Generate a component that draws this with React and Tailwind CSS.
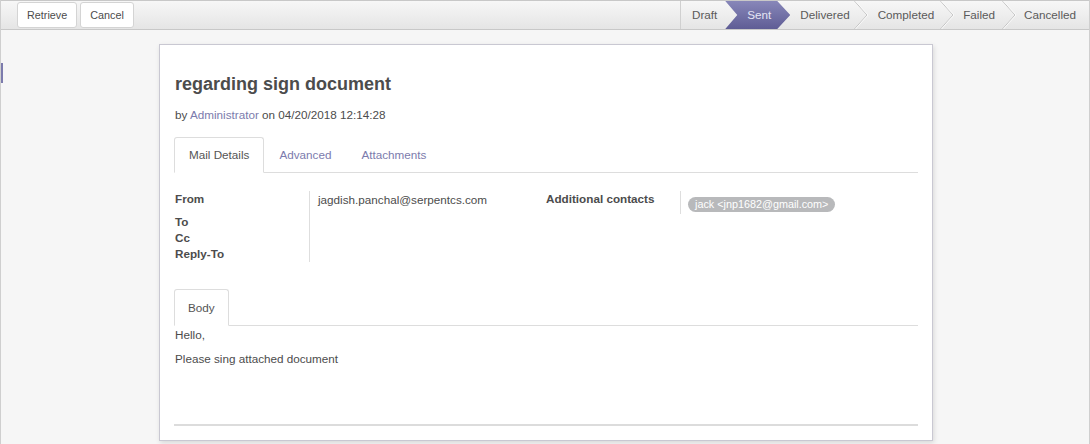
import React from "react";

function Chevron() {
  return (
    <svg width="14" height="28" viewBox="0 0 14 28" className="shrink-0 block">
      <polyline points="0.5,0 13,14 0.5,28" fill="none" stroke="#c4c4c4" strokeWidth="1" />
      <polyline points="1.5,0 14,14 1.5,28" fill="none" stroke="#fafafa" strokeWidth="1" />
    </svg>
  );
}

export default function App() {
  return (
    <div className="relative h-[444px] w-[1090px] overflow-hidden border-l border-r border-[#cfcfcf] bg-[#f6f6f6] font-['Liberation_Sans',Arial,sans-serif] text-[#4c4c4c]">
      <div className="absolute left-0 top-[63px] h-[20px] w-[2px] bg-[#7c7bad]" />

      {/* status bar */}
      <div className="flex h-[30px] items-stretch border-t border-b border-[#c8c8c8] bg-gradient-to-b from-[#f7f7f7] to-[#e5e5e5]">
        <div className="flex items-center gap-[3px] pl-[16px]">
          <button className="h-[26px] rounded-[3px] border border-[#d4d4d4] bg-white px-[9px] text-[10.8px] text-[#4c4c4c]">
            Retrieve
          </button>
          <button className="h-[26px] rounded-[3px] border border-[#d4d4d4] bg-white px-[9px] text-[10.8px] text-[#4c4c4c]">
            Cancel
          </button>
        </div>
        <div className="ml-auto flex h-[28px] items-stretch border-l border-[#d0d0d0] text-[11.7px] text-[#5a5a5a]">
          <div className="flex items-center pl-[11px] pr-[8px]">Draft</div>
          <div className="flex w-[65px] items-center justify-center bg-gradient-to-b from-[#8887b9] to-[#5f5d95] pl-[3px] text-[#e4e4f4] [clip-path:polygon(0_0,calc(100%_-_13px)_0,100%_50%,calc(100%_-_13px)_100%,0_100%,12px_50%)]">
            Sent
          </div>
          <div className="flex items-center pl-[10px] pr-[4px]">Delivered</div>
          <Chevron />
          <div className="flex items-center pl-[10px] pr-[6px]">Completed</div>
          <Chevron />
          <div className="flex items-center pl-[9px] pr-[7px]">Failed</div>
          <Chevron />
          <div className="flex items-center pl-[8px] pr-[13px]">Cancelled</div>
        </div>
      </div>

      {/* sheet */}
      <div className="ml-[158px] mt-[14px] w-[774px] border border-[#c9c8d2] bg-white pl-[15px] pr-[14px] pt-[28px] shadow-[1px_2px_5px_rgba(0,0,0,0.12)]">
        <h1 className="text-[18px] font-bold leading-[22px] text-[#4c4c4c]">regarding sign document</h1>
        <div className="mt-[11px] text-[11.7px] leading-[18px]">
          by <span className="text-[#7c7bad]">Administrator</span> on 04/20/2018 12:14:28
        </div>

        {/* tabs */}
        <div className="-ml-px mt-[13px] flex h-[36px] items-stretch border-b border-[#dddddd] text-[11.7px]">
          <div className="-mb-px flex items-center rounded-t-[3px] border border-[#dddddd] border-b-white bg-white px-[14px] text-[#555]">
            Mail Details
          </div>
          <div className="flex items-center px-[15px] text-[#7c7bad]">Advanced</div>
          <div className="flex items-center px-[15px] text-[#7c7bad]">Attachments</div>
        </div>

        {/* groups */}
        <div className="mt-[18px] flex text-[11.7px]">
          <div className="flex w-[371px]">
            <div className="flex w-[134px] flex-col font-bold leading-[16px]">
              <div>From</div>
              <div className="mt-[7px]">To</div>
              <div>Cc</div>
              <div>Reply-To</div>
            </div>
            <div className="border-l border-[#dedede] pl-[8px] leading-[18px]">
              jagdish.panchal@serpentcs.com
            </div>
          </div>
          <div className="flex flex-1">
            <div className="w-[134px] font-bold leading-[16px]">Additional contacts</div>
            <div className="h-[23px] border-l border-[#dedede] pl-[7px] pt-[4px]">
              <span className="inline-block h-[15px] rounded-full bg-[#b8b9bb] px-[7px] text-[10.8px] leading-[15px] text-white">
                jack &lt;jnp1682@gmail.com&gt;
              </span>
            </div>
          </div>
        </div>

        {/* body tab */}
        <div className="-ml-px mt-[27px] flex h-[37px] items-stretch border-b border-[#dddddd] text-[11.7px]">
          <div className="-mb-px flex items-center rounded-t-[3px] border border-[#dddddd] border-b-white bg-white px-[13px] text-[#555]">
            Body
          </div>
        </div>
        <div className="-ml-px h-[100px] border-b-2 border-[#dcdcdc] pl-px text-[11.7px] leading-[18px]">
          <p>Hello,</p>
          <p className="mt-[6px]">Please sing attached document</p>
        </div>
        <div className="h-[14px]" />
      </div>
    </div>
  );
}
